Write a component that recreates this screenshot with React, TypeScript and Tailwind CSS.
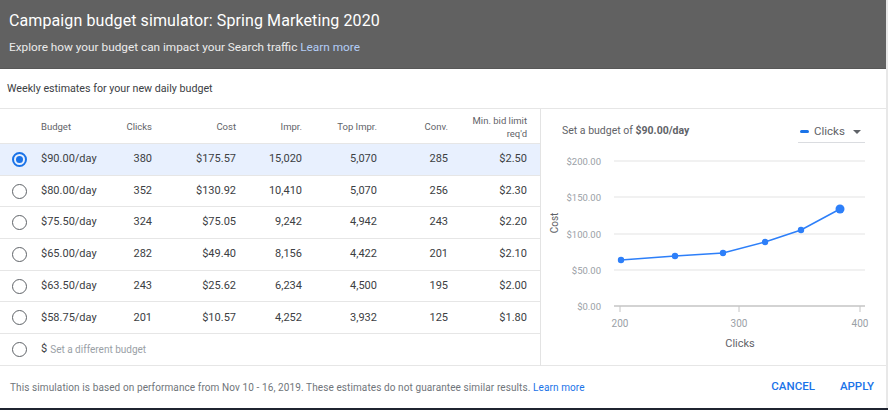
const rows = [
  { budget: "$90.00/day", clicks: "380", cost: "$175.57", impr: "15,020", top: "5,070", conv: "285", bid: "$2.50" },
  { budget: "$80.00/day", clicks: "352", cost: "$130.92", impr: "10,410", top: "5,070", conv: "256", bid: "$2.30" },
  { budget: "$75.50/day", clicks: "324", cost: "$75.05", impr: "9,242", top: "4,942", conv: "243", bid: "$2.20" },
  { budget: "$65.00/day", clicks: "282", cost: "$49.40", impr: "8,156", top: "4,422", conv: "201", bid: "$2.10" },
  { budget: "$63.50/day", clicks: "243", cost: "$25.62", impr: "6,234", top: "4,500", conv: "195", bid: "$2.00" },
  { budget: "$58.75/day", clicks: "201", cost: "$10.57", impr: "4,252", top: "3,932", conv: "125", bid: "$1.80" },
];

// column widths, numbers are right aligned
const cols = "grid grid-cols-[38px_70px_44px_84px_66px_75px_71px_79px]";

function Radio({ on }: { on?: boolean }) {
  return on ? (
    <span className="grid size-[15px] place-items-center rounded-full border-2 border-[#1a73e8]">
      <span className="size-[7px] rounded-full bg-[#1a73e8]" />
    </span>
  ) : (
    <span className="size-[15px] rounded-full border-[1.5px] border-[#5f6368]" />
  );
}

function Chart() {
  const ox = 541;
  const oy = 150;
  const pts = [
    [621, 259],
    [675, 255],
    [723, 252],
    [765, 241],
    [801, 229],
    [840, 208],
  ].map(([x, y]) => [x - ox, y - oy]);
  const grid = [
    { y: 160, l: "$200.00" },
    { y: 196, l: "$150.00" },
    { y: 233, l: "$100.00" },
    { y: 269, l: "$50.00" },
  ];
  return (
    <svg width="345" height="215" className="block" style={{ fontFamily: "Roboto, sans-serif" }}>
      {grid.map((g) => (
        <g key={g.l}>
          <line x1={73} x2={324} y1={g.y - oy} y2={g.y - oy} stroke="#e3e3e3" />
          <text x={60} y={g.y - oy + 3.5} textAnchor="end" fontSize="9.5" fill="#9aa0a6">
            {g.l}
          </text>
        </g>
      ))}
      <line x1={73} x2={324} y1={305 - oy} y2={305 - oy} stroke="#c4c4c4" strokeWidth="1.5" />
      <text x={60} y={305 - oy + 3.5} textAnchor="end" fontSize="9.5" fill="#9aa0a6">
        $0.00
      </text>
      {[
        [620, "200"],
        [739, "300"],
        [860, "400"],
      ].map(([x, l]) => (
        <g key={l}>
          <line x1={(x as number) - ox} x2={(x as number) - ox} y1={305 - oy} y2={311 - oy} stroke="#c4c4c4" />
          <text x={(x as number) - ox} y={326 - oy} textAnchor="middle" fontSize="10" fill="#9aa0a6">
            {l}
          </text>
        </g>
      ))}
      <text x={740 - ox} y={346 - oy} textAnchor="middle" fontSize="11" fill="#5f6368">
        Clicks
      </text>
      <text
        x={0}
        y={0}
        transform={`translate(${558 - ox} ${222 - oy}) rotate(-90)`}
        textAnchor="middle"
        fontSize="10"
        fill="#5f6368"
      >
        Cost
      </text>
      <polyline points={pts.map((p) => p.join(",")).join(" ")} fill="none" stroke="#2d7ff9" strokeWidth="1.5" />
      {pts.map(([x, y], i) => (
        <circle key={i} cx={x} cy={y} r={i === pts.length - 1 ? 4.5 : 3.2} fill="#2d7ff9" />
      ))}
    </svg>
  );
}

export default function App() {
  return (
    <div className="flex h-[410px] w-[888px] flex-col bg-white font-['Roboto',sans-serif]">
      <div className="flex min-h-0 flex-1">
        <div className="flex w-[886px] flex-col">
          <header className="h-[69px] border-b border-[#575757] bg-[#616161] px-[9px] pt-[10px]">
            <h1 className="text-[16px] leading-[21px] tracking-[0.1px] text-white">
              Campaign budget simulator: Spring Marketing 2020
            </h1>
            <p className="mt-[8px] text-[11.8px] leading-[16px] text-[#ececec]">
              Explore how your budget can impact your Search traffic{" "}
              <span className="text-[#b3cdf7]">Learn more</span>
            </p>
          </header>

          <div className="flex h-[40px] items-center border-b border-[#e6e6e6] px-[7px] pt-[2px] text-[10.7px] text-[#3c4043]">
            Weekly estimates for your new daily budget
          </div>

          <div className="flex h-[257px]">
            <div className="w-[541px] border-r border-[#e3e3e3] text-[11px] text-[#3c4043]">
              <div className={`${cols} h-[35px] items-center border-b border-[#e6e6e6] text-[9.5px] leading-[13px] text-[#5f6368]`}>
                <span />
                <span className="pl-[3px]">Budget</span>
                <span className="text-right">Clicks</span>
                <span className="text-right">Cost</span>
                <span className="text-right">Impr.</span>
                <span className="text-right">Top Impr.</span>
                <span className="text-right">Conv.</span>
                <span className="pt-[2px] text-right">
                  Min. bid limit
                  <br />
                  req'd
                </span>
              </div>
              {rows.map((r, i) => (
                <div
                  key={r.budget}
                  className={`${cols} h-[31.7px] items-center border-b border-[#e6e6e6] ${i === 0 ? "bg-[#e8f0fe]" : ""}`}
                >
                  <span className="flex justify-center pl-[1px]">
                    <Radio on={i === 0} />
                  </span>
                  <span className="pl-[3px]">{r.budget}</span>
                  <span className="text-right">{r.clicks}</span>
                  <span className="text-right">{r.cost}</span>
                  <span className="text-right">{r.impr}</span>
                  <span className="text-right">{r.top}</span>
                  <span className="text-right">{r.conv}</span>
                  <span className="text-right">{r.bid}</span>
                </div>
              ))}
              <div className="flex h-[32px] items-center border-b border-[#e6e6e6]">
                <span className="flex w-[38px] justify-center pl-[1px]">
                  <Radio />
                </span>
                <span className="pl-[3px] text-[11px] text-[#3c4043]">$</span>
                <span className="ml-[3px] text-[10px] text-[#9aa0a6]">Set a different budget</span>
              </div>
            </div>

            <div className="flex-1 border-b border-[#e6e6e6]">
              <div className="flex h-[42px] items-start justify-between pl-[21px] pr-[21px] pt-[14px]">
                <span className="text-[10.5px] text-[#5f6368]">
                  Set a budget of <span className="font-bold text-[#5f6368]">$90.00/day</span>
                </span>
                <div className="-mt-[2px] flex h-[22px] w-[67px] items-center gap-[5px] border-b border-[#dadce0] pl-[2px]">
                  <span className="h-[3px] w-[9px] rounded-sm bg-[#1a73e8]" />
                  <span className="text-[11.5px] text-[#5f6368]">Clicks</span>
                  <span className="ml-auto mr-[4px] h-0 w-0 border-x-[4.5px] border-t-[4.5px] border-x-transparent border-t-[#5f6368]" />
                </div>
              </div>
              <Chart />
            </div>
          </div>

          <footer className="flex flex-1 items-center justify-between pl-[10px] pr-[12px]">
            <p className="text-[10px] tracking-[0.1px] text-[#70757a]">
              This simulation is based on performance from Nov 10 - 16, 2019. These estimates do not guarantee
              similar results. <span className="text-[#1a73e8]">Learn more</span>
            </p>
            <div className="flex gap-[25px] text-[11.5px] font-medium text-[#1a73e8]">
              <button>CANCEL</button>
              <button>APPLY</button>
            </div>
          </footer>
        </div>
        <div className="w-[2px] bg-[#e8e8e8]" />
      </div>
      <div className="h-[2px] bg-[#1f2430]" />
    </div>
  );
}
